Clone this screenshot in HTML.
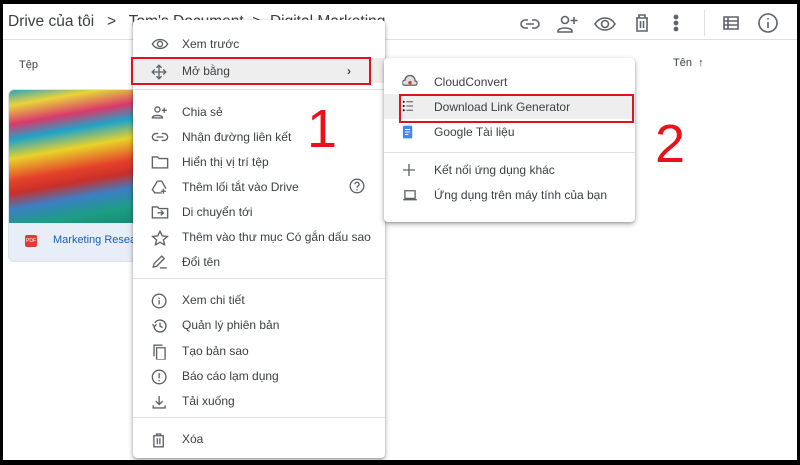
<!DOCTYPE html><html><head><meta charset="utf-8"><style>
body{margin:0;width:800px;height:465px;background:#000;position:relative;overflow:hidden;font-family:"Liberation Sans",sans-serif;color:#202124}
.page{position:absolute;left:3px;top:4px;width:794px;height:456px;background:#fff;overflow:hidden}
.a{position:absolute}
.menu{position:absolute;background:#fff;border-radius:4px;box-shadow:0 2px 6px rgba(0,0,0,.3),0 1px 2px rgba(0,0,0,.2)}
.it{position:absolute;left:0;right:0;height:25px;font-size:12px;line-height:27px;color:#3c4043}
.it span{position:absolute;left:49px}
.it svg{position:absolute;left:17px;top:5px;transform:scale(.85)}
.dv{position:absolute;left:0;right:0;height:1px;background:#e0e0e0}
.sub .it span{left:50px}
.sub .it svg{left:17px}
svg{fill:none;stroke:#5f6368;stroke-width:1.6}
</style></head><body><div class="page">
<div class="a" style="left:5px;top:9px;font-size:15.5px;color:#3c4043">Drive của tôi&nbsp;&nbsp; &gt;&nbsp;&nbsp; Tom's Document&nbsp; &gt;&nbsp; Digital Marketing</div>
<div class="a" style="left:0;right:0;top:35px;height:1px;background:#e0e0e0"></div>
<div class="a" style="left:16px;top:55px;font-size:11px;color:#3c4043">Tệp</div>
<div class="a" style="left:670px;top:53px;font-size:11px;color:#3c4043">Tên &nbsp;↑</div>
<svg class="a" style="left:517px;top:10px" width="20" height="20" viewBox="0 0 20 20"><path d="M8 6H5a4 4 0 000 8h3M12 6h3a4 4 0 010 8h-3M6 10h8"/></svg>
<svg class="a" style="left:554px;top:10px" width="22" height="20" viewBox="0 0 22 20"><circle cx="8" cy="6" r="3.5"/><path d="M1 17c0-4 14-4 14 0v1H1zM17 3v7M13.5 6.5h7"/></svg>
<svg class="a" style="left:591px;top:10px" width="22" height="20" viewBox="0 0 22 20"><path d="M1 10c5-8 15-8 20 0c-5 8-15 8-20 0z"/><circle cx="11" cy="10" r="3.5"/></svg>
<svg class="a" style="left:630px;top:9px" width="18" height="20" viewBox="0 0 18 20"><path d="M3 5h12M6 5V2h6v3M4 5v13h10V5M7.5 8v7M10.5 8v7"/></svg>
<svg class="a" style="left:670px;top:9px" width="6" height="20" viewBox="0 0 6 20"><circle cx="3" cy="4" r="1.6" fill="#5f6368"/><circle cx="3" cy="10" r="1.6" fill="#5f6368"/><circle cx="3" cy="16" r="1.6" fill="#5f6368"/></svg>
<div class="a" style="left:701px;top:6px;width:1px;height:26px;background:#e0e0e0"></div>
<svg class="a" style="left:719px;top:10px" width="18" height="18" viewBox="0 0 18 18"><path d="M2 3h14v12H2zM2 7h14M2 11h14M6 3v12"/></svg>
<svg class="a" style="left:754px;top:8px" width="22" height="22" viewBox="0 0 22 22"><circle cx="11" cy="11" r="9"/><path d="M11 10v6M11 6v1.5"/></svg>
<div class="a" style="left:5px;top:85px;width:140px;height:171px;border-radius:6px;background:#e8eef7;overflow:hidden;border:1px solid #dde3ea">
<div style="height:133px;background:linear-gradient(170deg,#2aa3c0 0%,#e9d43a 10%,#d93a6b 22%,#1fa4c8 32%,#e8d329 44%,#e5412a 58%,#c92f2a 66%,#3b7fc4 76%,#1b9e84 88%,#128a70 100%)"></div>
<div style="position:absolute;left:16px;top:145px;width:12px;height:12px;background:#e53935;border-radius:2px;color:#fff;font-size:5px;line-height:12px;text-align:center">PDF</div>
<div style="position:absolute;left:44px;top:144px;font-size:11px;color:#1a5fb4;white-space:nowrap">Marketing Research</div>
</div>
<div class="menu" style="left:130px;top:16px;width:252px;height:438px">
<div class="it" style="top:11px"><svg width="20" height="16" viewBox="0 0 20 16"><path d="M1 8c4-7 14-7 18 0c-4 7-14 7-18 0z"/><circle cx="10" cy="8" r="3"/></svg><span>Xem trước</span></div>
<div class="it" style="top:38px;background:#eee"><svg width="18" height="18" viewBox="0 0 18 18"><path d="M9 1v16M1 9h16M6 4l3-3 3 3M6 14l3 3 3-3M4 6L1 9l3 3M14 6l3 3-3 3"/></svg><span>Mở bằng</span><span style="left:214px;font-weight:bold">›</span></div>
<div class="dv" style="top:69px"></div>
<div class="it" style="top:79px"><svg width="20" height="16" viewBox="0 0 20 16"><circle cx="7" cy="5" r="3"/><path d="M1 15c0-4 12-4 12 0zM15 3v6M12 6h6"/></svg><span>Chia sẻ</span></div>
<div class="it" style="top:104px"><svg width="20" height="16" viewBox="0 0 20 16"><path d="M8 4H5a4 4 0 000 8h3M12 4h3a4 4 0 010 8h-3M6 8h8"/></svg><span>Nhận đường liên kết</span></div>
<div class="it" style="top:129px"><svg width="20" height="16" viewBox="0 0 20 16"><path d="M1 2h6l2 2h10v11H1z"/></svg><span>Hiển thị vị trí tệp</span></div>
<div class="it" style="top:154px"><svg width="20" height="16" viewBox="0 0 20 16"><path d="M7 1h5l5 9M7 1L1 11l3 4h8M14 10v6M11 13h6"/></svg><span>Thêm lối tắt vào Drive</span><svg style="left:215px;top:3px" width="18" height="18" viewBox="0 0 18 18"><circle cx="9" cy="9" r="8"/><path d="M6.5 7a2.5 2.5 0 115 0c0 2-2.5 2-2.5 4M9 13v1.5"/></svg></div>
<div class="it" style="top:179px"><svg width="20" height="16" viewBox="0 0 20 16"><path d="M1 2h6l2 2h10v11H1zM7 9h7M11 6l3 3-3 3"/></svg><span>Di chuyển tới</span></div>
<div class="it" style="top:204px"><svg width="20" height="18" viewBox="0 0 20 18"><path d="M10 1l2.6 5.5 6 .7-4.5 4 1.3 6L10 14l-5.4 3.2 1.3-6-4.5-4 6-.7z"/></svg><span>Thêm vào thư mục Có gắn dấu sao</span></div>
<div class="it" style="top:229px"><svg width="20" height="16" viewBox="0 0 20 16"><path d="M2 14l1-4 9-9 3 3-9 9zM10 15h8"/></svg><span>Đổi tên</span></div>
<div class="dv" style="top:258px"></div>
<div class="it" style="top:267px"><svg width="20" height="18" viewBox="0 0 20 18"><circle cx="9" cy="9" r="8"/><path d="M9 8v5M9 5v1.5"/></svg><span>Xem chi tiết</span></div>
<div class="it" style="top:292px"><svg width="20" height="18" viewBox="0 0 20 18"><path d="M3 9a7 7 0 107-7 7 7 0 00-6 3.5M1 7l2.5 2.5L6 7M10 5v4l3 2"/></svg><span>Quản lý phiên bản</span></div>
<div class="it" style="top:318px"><svg width="20" height="18" viewBox="0 0 20 18"><path d="M3 14V1h10M6 4h10v14H6z"/></svg><span>Tạo bản sao</span></div>
<div class="it" style="top:343px"><svg width="20" height="18" viewBox="0 0 20 18"><circle cx="9" cy="9" r="8"/><path d="M9 4.5v6M9 12.5v1.5"/></svg><span>Báo cáo lạm dụng</span></div>
<div class="it" style="top:368px"><svg width="20" height="18" viewBox="0 0 20 18"><path d="M9 2v10M5 8l4 4 4-4M2 13v3h14v-3"/></svg><span>Tải xuống</span></div>
<div class="dv" style="top:397px"></div>
<div class="it" style="top:406px"><svg width="18" height="18" viewBox="0 0 18 18"><path d="M2 4h13M6 4V2h5v2M3 4v13h11V4M7 7v7M10 7v7"/></svg><span>Xóa</span></div>
</div>
<div class="a" style="left:128px;top:53px;width:236px;height:24px;border:2px solid #e0121b"></div>
<div class="a" style="left:304px;top:94px;font-size:54px;color:#e8121b">1</div>
<div class="menu sub" style="left:381px;top:54px;width:251px;height:164px">
<div class="it" style="top:11px"><svg width="18" height="14" viewBox="0 0 18 14"><path d="M3 12a3 3 0 010-6 6 6 0 0112 1 2.5 2.5 0 010 5z" fill="#ddd"/><circle cx="9" cy="9" r="2" fill="#d33" stroke="none"/></svg><span>CloudConvert</span></div>
<div class="it" style="top:36px;background:#eee"><svg width="14" height="14" viewBox="0 0 14 14"><path d="M1 2h2M1 7h2M1 12h2" stroke="#000" stroke-width="2.2"/><path d="M5 2h8M5 7h8M5 12h8" stroke="#555" stroke-width="1.2"/></svg><span>Download Link Generator</span></div>
<div class="it" style="top:61px"><svg width="14" height="16" viewBox="0 0 14 16"><rect x="1" y="0.5" width="11" height="15" rx="1.5" fill="#4285f4" stroke="none"/><path d="M3.5 5h6M3.5 8h6M3.5 11h4" stroke="#fff" stroke-width="1.2"/></svg><span>Google Tài liệu</span></div>
<div class="dv" style="top:94px"></div>
<div class="it" style="top:99px"><svg width="16" height="16" viewBox="0 0 16 16"><path d="M8 1v14M1 8h14"/></svg><span>Kết nối ứng dụng khác</span></div>
<div class="it" style="top:124px"><svg width="18" height="16" viewBox="0 0 18 16"><path d="M3 3h12v9H3zM1 13.5h16"/></svg><span>Ứng dụng trên máy tính của bạn</span></div>
</div>
<div class="a" style="left:396px;top:90px;width:231px;height:25px;border:2px solid #e0121b"></div>
<div class="a" style="left:652px;top:109px;font-size:54px;color:#e8121b">2</div>
</div></body></html>
